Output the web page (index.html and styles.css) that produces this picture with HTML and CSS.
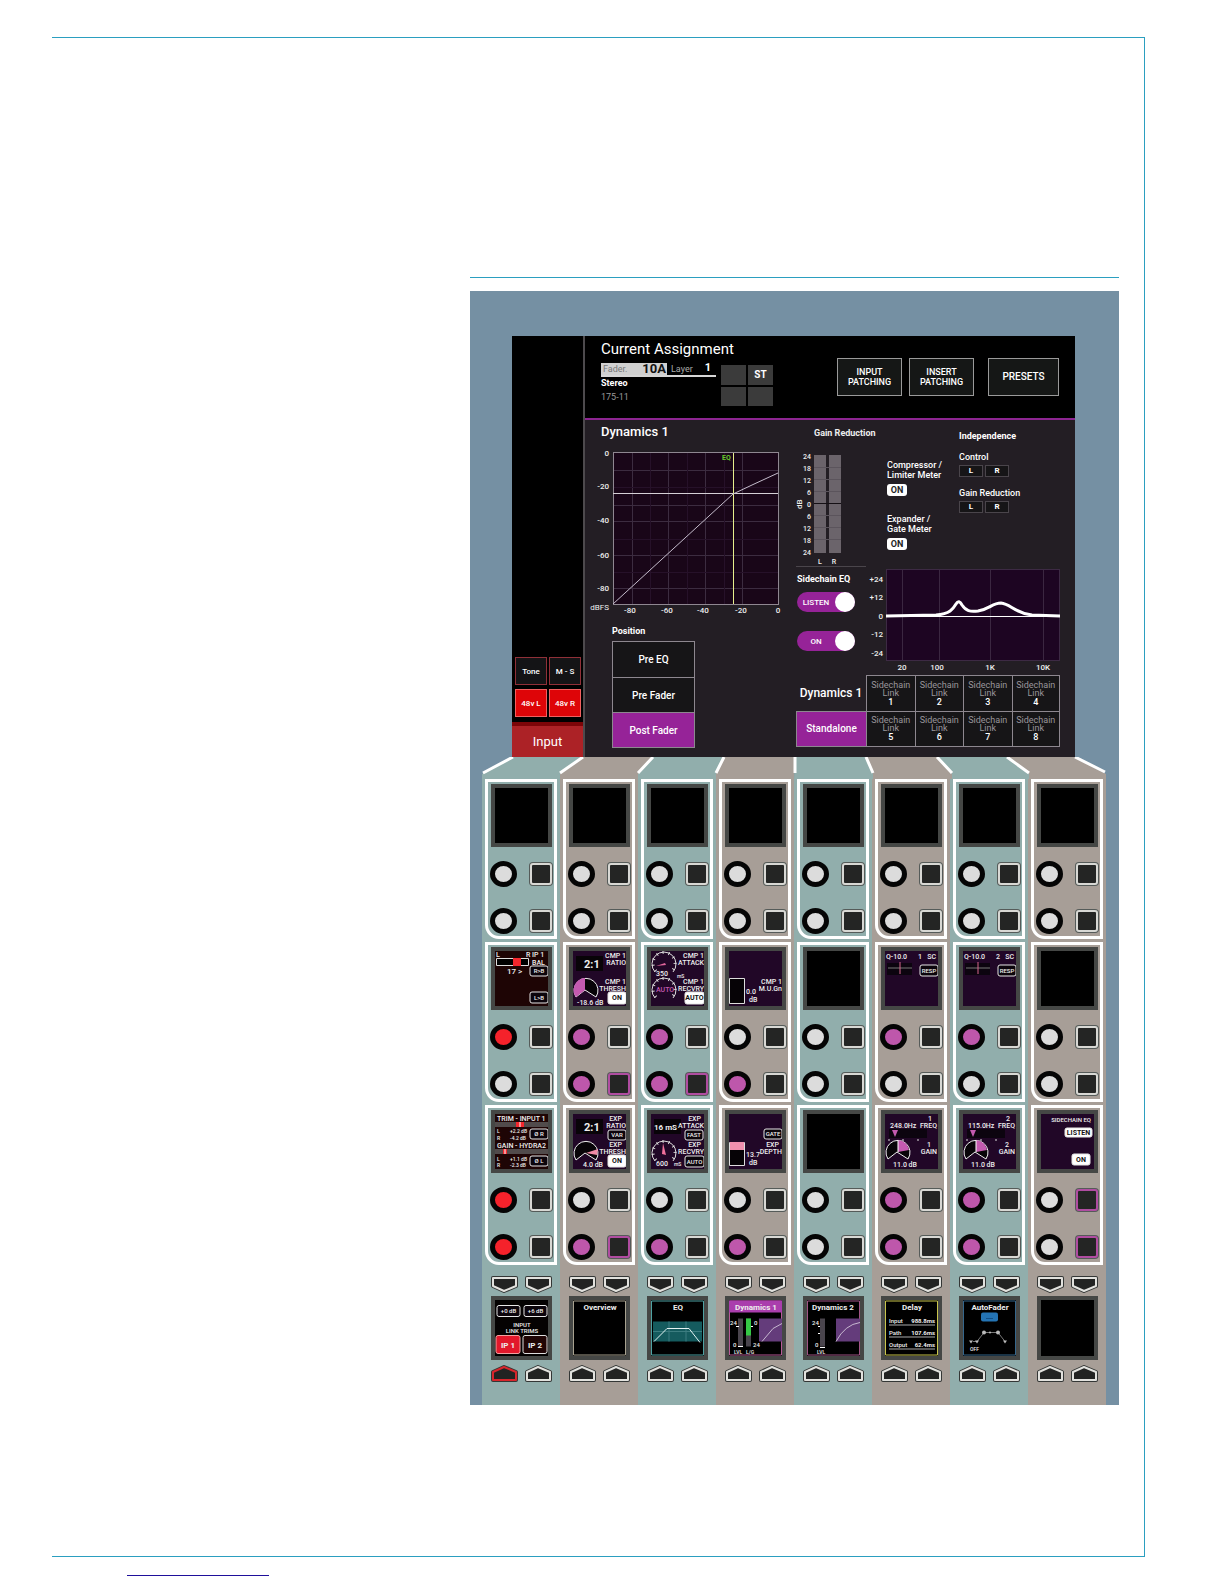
FILE: index.html
```html
<!DOCTYPE html>
<html lang="en">
<head>
    <meta charset="UTF-8">
    <meta name="viewport" content="width=device-width, initial-scale=1.0">
    <title>Current Assignment</title>
    <link rel="stylesheet" href="styles.css">
</head>
<body>

<main class="sheet">
    <div class="console">

        <!-- Touch screen -->
        <section class="screen">
            <aside class="side">
                <div class="side-buttons">
                    <button>Tone</button>
                    <button>M - S</button>
                    <button class="red">48v L</button>
                    <button class="red">48v R</button>
                </div>
                <button class="input-btn">Input</button>
            </aside>

            <div class="assign">
                <header class="top">
                    <div class="info">
                        <h1>Current Assignment</h1>
                        <div class="fader-line">
                            <span class="fader">Fader.<b>10A</b></span>
                            <span class="layer">Layer<b>1</b></span>
                        </div>
                        <div class="stereo">Stereo</div>
                        <div class="source">175-11</div>
                    </div>
                    <div class="legs"><span></span><span>ST</span><span></span><span></span></div>
                    <div class="top-buttons">
                        <button>INPUT<br>PATCHING</button>
                        <button>INSERT<br>PATCHING</button>
                        <button class="presets">PRESETS</button>
                    </div>
                </header>

                <div class="content">
                    <div class="left">
                        <h2>Dynamics 1</h2>
                        <svg class="curve" width="198" height="172" viewBox="0 0 198 172">
                            <rect x="26.5" y="8.5" width="165" height="152" fill="#190618" stroke="#8f8791"/>
                            <path d="M45.5 9V160M81.5 9V160M118.5 9V160M155.5 9V160M27 26.5H191M27 61.5H191M27 77.5H191M27 111.5H191M27 144.5H191" stroke="#3c2c40" fill="none"/>
                            <path d="M27 43.5H191M27 95.5H191M27 128.5H191M63.5 9V160M100.5 9V160M137.5 9V160" stroke="#261129" fill="none"/>
                            <path d="M26 49.5H191" stroke="#d5d0d6"/>
                            <path d="M146.5 9V160" stroke="#e6ee8c"/>
                            <path d="M26 160L146 50L165 41L191 29" stroke="#c4bccb" fill="none"/>
                            <text class="green" x="135" y="16">EQ</text>
                            <g class="axis end">
                                <text x="22" y="12">0</text>
                                <text x="22" y="45">-20</text>
                                <text x="22" y="79">-40</text>
                                <text x="22" y="114">-60</text>
                                <text x="22" y="147">-80</text>
                                <text x="22" y="166" class="thin">dBFS</text>
                            </g>
                            <g class="axis mid">
                                <text x="43" y="169">-80</text>
                                <text x="80" y="169">-60</text>
                                <text x="116" y="169">-40</text>
                                <text x="154" y="169">-20</text>
                                <text x="191" y="169">0</text>
                            </g>
                        </svg>
                        <h3>Position</h3>
                        <div class="position">
                            <button>Pre EQ</button>
                            <button>Pre Fader</button>
                            <button class="on">Post Fader</button>
                        </div>
                    </div>

                    <div class="right">
                        <div class="meters">
                            <svg width="90" height="146" viewBox="0 0 90 146">
                                <text class="bold" x="18" y="16">Gain Reduction</text>
                                <path d="M18 35H30V133H18zM33 35H45V133H33z" fill="#6b646b"/>
                                <path d="M18 47.5H45M18 59.5H45M18 71.5H45M18 95.5H45M18 107.5H45M18 119.5H45" stroke="#5b545c"/>
                                <path d="M18 83.5H45" stroke="#151015"/>
                                <g class="scale end">
                                    <text x="15" y="39">24</text>
                                    <text x="15" y="51">18</text>
                                    <text x="15" y="63">12</text>
                                    <text x="15" y="75">6</text>
                                    <text x="15" y="87">0</text>
                                    <text x="15" y="99">6</text>
                                    <text x="15" y="111">12</text>
                                    <text x="15" y="123">18</text>
                                    <text x="15" y="135">24</text>
                                </g>
                                <text class="db" transform="rotate(-90 6 89)" x="6" y="89">dB</text>
                                <g class="scale mid">
                                    <text x="24" y="144">L</text>
                                    <text x="38" y="144">R</text>
                                </g>
                            </svg>
                            <div class="meter-switches">
                                <div>Compressor /<br>Limiter Meter</div>
                                <button class="chip">ON</button>
                                <div>Expander /<br>Gate Meter</div>
                                <button class="chip">ON</button>
                            </div>
                            <div class="independence">
                                <h3>Independence</h3>
                                <div>Control</div>
                                <div class="lr"><button>L</button><button>R</button></div>
                                <div>Gain Reduction</div>
                                <div class="lr"><button>L</button><button>R</button></div>
                            </div>
                        </div>

                        <div class="sidechain">
                            <div class="toggles">
                                <h3>Sidechain EQ</h3>
                                <label class="toggle"><span>LISTEN</span><input type="checkbox" checked></label>
                                <label class="toggle"><span>ON</span><input type="checkbox" checked></label>
                            </div>
                            <svg width="194" height="109" viewBox="0 0 194 109">
                                <rect x="20.5" y="3.5" width="173" height="91" fill="#1d0522" stroke="#3d2a44"/>
                                <path d="M36.5 4V94M73.5 4V94M124.5 4V94M177.5 4V94" stroke="#3b2741"/>
                                <path d="M20 50.5H194" stroke="#fff"/>
                                <path d="M20 50L70 49C84 48 87 43 90 38Q93 33 96 39C100 45 104 46 112 45C124 43 126 37 135 37C145 38 148 47 166 49L194 50" stroke="#fff" stroke-width="3" fill="none"/>
                                <g class="axis end">
                                    <text x="17" y="16">+24</text>
                                    <text x="17" y="34">+12</text>
                                    <text x="17" y="53">0</text>
                                    <text x="17" y="71">-12</text>
                                    <text x="17" y="90">-24</text>
                                </g>
                                <g class="axis mid">
                                    <text x="36" y="104">20</text>
                                    <text x="71" y="104">100</text>
                                    <text x="124" y="104">1K</text>
                                    <text x="177" y="104">10K</text>
                                </g>
                            </svg>
                        </div>

                        <div class="links">
                            <div class="links-title">Dynamics 1</div>
                            <button><span>Sidechain<br>Link</span>1</button>
                            <button><span>Sidechain<br>Link</span>2</button>
                            <button><span>Sidechain<br>Link</span>3</button>
                            <button><span>Sidechain<br>Link</span>4</button>
                            <button class="on">Standalone</button>
                            <button><span>Sidechain<br>Link</span>5</button>
                            <button><span>Sidechain<br>Link</span>6</button>
                            <button><span>Sidechain<br>Link</span>7</button>
                            <button><span>Sidechain<br>Link</span>8</button>
                        </div>
                    </div>
                </div>
            </div>
        </section>

        <!-- Perspective join between the screen and the strips -->
        <svg class="fan" viewBox="0 0 624 22" preserveAspectRatio="none">
            <path fill="#91aeac" d="M29 0H101L78 17V22H0V17zM171 0H242L234 17V22H156V17zM313 0H384L391 17V22H312zM455 0H525L547 17V22H470V17z"/>
            <path fill="#a79e97" d="M101 0H171L156 17V22H78V17zM242 0H313L312 22H234V17zM384 0H455L470 17V22H391V17zM525 0H593L624 17V22H547V17z"/>
            <path stroke="#fff" stroke-width="3" fill="none" d="M31 0L1 16M101 0L78 16M171 0L156 16M242 0L234 16M313 0V16M384 0L391 16M455 0L470 16M525 0L547 16M593 0L623 15"/>
        </svg>

        <!-- Strips are filled in by the script -->
        <section class="strips" id="strips"></section>
    </div>
</main>
<div class="foot-rule"></div>

<script>
    // Small helpers for the display drawings
    const t = (x, y, text, cls = '') => `<text x="${x}" y="${y}" class="${cls}">${text}</text>`;
    const box = (x, y, w, h, text, cls = '') =>
        `<rect x="${x}" y="${y}" width="${w}" height="${h}" rx="2" class="box ${cls}"/>` +
        t(x + w / 2, y + h / 2 + 2, text, 'mid small ' + cls);
    const bg = color => `<rect width="53" height="55" fill="${color}"/>`;
    const purple = bg('#210727');
    const arc = (y, rest) =>
        `<path d="M5 ${y + 7}A11 11 0 1 1 21 ${y + 7}" stroke="#ddd" stroke-width="3" stroke-dasharray="1 5" fill="none"/>
         <path d="M4 ${y + 8}A12 12 0 1 1 22 ${y + 8}" stroke="#ddd" fill="none"/>${rest}`;
    const pie = (y, slice) =>
        `<path d="M12 ${y}L3 ${y + 7}A12 12 0 1 1 23 ${y + 7}z" fill="#080408" stroke="#eee"/>${slice}`;

    const sidechainQ = n => purple +
        `<path d="M2 12H27V24H2z" fill="#0c040f"/><path d="M3 17H27" stroke="#777"/><path d="M15 11V23" stroke="#d7668e"/>` +
        t(1, 8, 'Q-10.0') + t(33, 8, n) + t(51, 8, 'SC', 'end') + box(35, 14, 18, 11, 'RESP');
    const sidechainFreq = (n, freq) => purple +
        `<path d="M4 15H42V24H4z" fill="#0c040f"/><path d="M7 16H13L10 23z" fill="#c45ab0"/><path d="M4 25V27M18 25V27M33 25V27" stroke="#ddd"/>` +
        t(5, 14, freq) + t(47, 7, n, 'end') + t(52, 14, 'FREQ', 'end') +
        pie(38, '<path d="M13 38V26A12 12 0 0 1 24 36z" fill="#c45ab0"/><path d="M13 26V38" stroke="#fff"/>') +
        t(44, 33, n, 'mid') + t(52, 40, 'GAIN', 'end') + t(8, 53, '11.0 dB');

    const displays = {
        bal: bg('#1e0505') + t(1, 6, 'L') + t(31, 6, 'R') + t(37, 6, 'IP 1') + t(37, 14, 'BAL') +
            '<path d="M1.5 7.5H33.5V14.5H1.5z" fill="#000" stroke="#ddd"/><path d="M18 7H26V15H18z" fill="#f3272d"/>' +
            t(12, 23, '17 &gt;', 'big') + box(35, 15, 18, 10, 'R&gt;B') + box(35, 41, 18, 11, 'L&gt;B'),
        cmpRatio: purple + '<path d="M3 5H30V20H3z" fill="#080408"/>' + t(11, 17, '2:1', 'ratio') +
            t(53, 7, 'CMP 1', 'end') + t(53, 14, 'RATIO', 'end') + t(53, 33, 'CMP 1', 'end') +
            pie(39, '<path d="M12 39L3 46A12 12 0 0 1 12 27z" fill="#c45ab0"/>') + t(53, 40, 'THRESH', 'end') + t(4, 54, '-18.6 dB') + box(35, 41, 18, 12, 'ON', 'lit'),
        cmpAttack: purple + t(53, 7, 'CMP 1', 'end') + t(53, 14, 'ATTACK', 'end') +
            arc(13, '<path d="M5 15L14 12L15 14z" fill="#e0669c"/>') + t(5, 25, '350') + t(26, 27, 'mS', 'tiny') +
            arc(39, t(5, 41, 'AUTO', 'pink')) + t(53, 33, 'CMP 1', 'end') + t(53, 40, 'RECVRY', 'end') + box(34, 41, 19, 12, 'AUTO', 'lit'),
        cmpMakeup: purple + '<path d="M.5 27.5H15.5V52.5H.5z" fill="#060306" stroke="#ddd"/>' +
            t(17, 43, '0.0') + t(20, 51, 'dB') + t(53, 33, 'CMP 1', 'end') + t(53, 40, 'M.U.Gn', 'end'),
        q1: sidechainQ(1),
        q2: sidechainQ(2),
        trim: bg('#1e0505') + t(2, 7, 'TRIM - INPUT 1') +
            '<path d="M0 8H53V13H0zM0 35H53V40H0z" fill="#514b4b"/><path d="M21 8H29V13H21zM8 35H12V40H8z" fill="#f3272d"/><path d="M25 8V13M10 35V40" stroke="#fff"/>' +
            t(2, 19, 'L', 'tiny') + t(15, 19, '+2.2 dB', 'tiny') + t(2, 26, 'R', 'tiny') + t(15, 26, '-4.2 dB', 'tiny') + box(35, 15, 18, 10, 'Ø R') +
            t(2, 34, 'GAIN - HYDRA2') +
            t(2, 47, 'L', 'tiny') + t(15, 47, '+1.1 dB', 'tiny') + t(2, 53, 'R', 'tiny') + t(15, 53, '-2.3 dB', 'tiny') + box(35, 42, 18, 10, 'Ø L'),
        expRatio: purple + '<path d="M3 5H30V20H3z" fill="#080408"/>' + t(11, 17, '2:1', 'ratio') +
            t(49, 7, 'EXP', 'end') + t(53, 14, 'RATIO', 'end') + box(35, 16, 18, 10, 'VAR') + t(49, 33, 'EXP', 'end') +
            pie(39, '<path d="M13 39L25 35L24 41z" fill="#f08ba6"/>') + t(53, 40, 'THRESH', 'end') + t(10, 53, '4.0 dB') + box(35, 41, 18, 12, 'ON', 'lit'),
        expAttack: purple + '<path d="M3 5H30V20H3z" fill="#080408"/>' + t(3, 16, '16 mS', 'mid-size') +
            t(50, 7, 'EXP', 'end') + t(53, 14, 'ATTACK', 'end') + box(34, 16, 18, 10, 'FAST') + t(50, 33, 'EXP', 'end') +
            arc(39, '<path d="M12 29L15 41L11 40z" fill="#f0719c"/>') + t(53, 40, 'RECVRY', 'end') + t(5, 52, '600') + t(23, 52, 'mS', 'tiny') + box(34, 42, 19, 11, 'AUTO'),
        gate: purple + '<path d="M.5 28.5H15.5V51.5H.5z" fill="#060306" stroke="#ddd"/><path d="M1 28H15V36H1z" fill="#f08fae"/>' +
            t(17, 43, '13.7') + t(20, 51, 'dB') + box(35, 15, 18, 10, 'GATE') + t(50, 33, 'EXP', 'end') + t(53, 40, 'DEPTH', 'end'),
        freq1: sidechainFreq(1, '248.0Hz'),
        freq2: sidechainFreq(2, '115.0Hz'),
        sidechain: purple + t(50, 8, 'SIDECHAIN EQ', 'end small') + box(24, 14, 27, 9, 'LISTEN', 'lit') + box(31, 40, 18, 11, 'ON', 'lit'),

        trims: bg('#050202') + box(2, 5, 23, 11, '+0 dB') + box(29, 5, 23, 11, '+6 dB') +
            t(27, 26, 'INPUT', 'mid small') + t(27, 32, 'LINK TRIMS', 'mid small') +
            '<rect x="1" y="35" width="24" height="18" rx="2" fill="#e2182b" stroke="#f2a0a0"/><rect x="28" y="35" width="24" height="18" rx="2" fill="#200505" stroke="#ddd"/>' +
            t(13, 47, 'IP 1', 'mid size8') + t(40, 47, 'IP 2', 'mid size8'),
        overview: bg('#000') + '<path d="M.5 .5H52.5V54.5H.5z" stroke="#a7a18f" fill="none"/>' + t(27, 9, 'Overview', 'mid name'),
        eq: bg('#000') + '<path d="M.5 .5H52.5V54.5H.5z" stroke="#4ea2a3" fill="none"/>' + t(27, 9, 'EQ', 'mid name') +
            '<path d="M2 21H51V41H2z" fill="#155b5e"/><path d="M2 31H51M18 21V41M35 21V41" stroke="#3c7d80"/><path d="M3 41L16 28H38L49 42" stroke="#e5f3f3" fill="none"/>',
        dyn1: bg('#000') + '<path d="M.5 .5H52.5V54.5H.5z" stroke="#b85b97" fill="none"/><path d="M0 0H53V12H0z" fill="#aa3ead"/>' + t(27, 9, 'Dynamics 1', 'mid name') +
            '<path d="M9 18H14V46H9zM17 18H22V46H17z" fill="#4a454d"/><path d="M17 18H22V35H17z" fill="#35c845"/><path d="M7 26H10M22 26H24M9 46H14" stroke="#fff"/><path d="M30 18H53V41H30z" fill="#643c7b"/><path d="M33 41L44 28L53 23" stroke="#c7b8d0" fill="none"/>' +
            t(1, 24, '24', 'small') + t(25, 24, '0', 'small') + t(4, 46, '0', 'small') + t(24, 46, '24', 'small') + t(5, 53, 'LVL', 'tiny') + t(17, 53, 'L/G', 'tiny'),
        dyn2: bg('#000') + '<path d="M.5 .5H52.5V54.5H.5z" stroke="#a15485" fill="none"/>' + t(26, 9, 'Dynamics 2', 'mid name') +
            '<path d="M13 18H18V46H13z" fill="#4a454d"/><path d="M11 26H13M11 33H13M13 47H18" stroke="#fff"/><path d="M29 18H53V41H29z" fill="#643c7b"/><path d="M29 41Q38 24 53 22" stroke="#c7b8d0" fill="none"/>' +
            t(5, 24, '24', 'small') + t(8, 46, '0', 'small') + t(10, 53, 'LVL', 'tiny'),
        delay: bg('#000') + '<path d="M.5 .5H52.5V54.5H.5z" stroke="#c9c54c" fill="none"/>' + t(27, 9, 'Delay', 'mid name') +
            t(4, 22, 'Input', 'small') + t(50, 22, '988.8ms', 'end strong') + t(4, 34, 'Path', 'small') + t(50, 34, '107.6ms', 'end strong') + t(4, 46, 'Output', 'small') + t(50, 46, '62.4ms', 'end strong') +
            '<path d="M4 24.5H50M4 36.5H50M4 48.5H50" stroke="#aaa"/>',
        auto: bg('#000') + '<path d="M.5 .5H52.5V54.5H.5z" stroke="#35668b" fill="none"/>' + t(27, 9, 'AutoFader', 'mid name') +
            '<rect x="18" y="12" width="17" height="9" rx="2" fill="#2474b4"/><path d="M23 18H30" stroke="#135087"/><path d="M10 41H14L21 32H35L42 41" stroke="#777" fill="none"/>' +
            '<path d="M6 40H10L8 43zM12 40H16L14 43zM40 40H44L42 43z" fill="#bbb"/><circle cx="21" cy="32" r="2" fill="#bbb"/><circle cx="27" cy="32" r="1" fill="#bbb"/><circle cx="35" cy="32" r="2" fill="#bbb"/>' +
            t(7, 50, 'OFF', 'tiny')
    };

    // Per column: three modules as [display, knob 1, knob 2, button 1, button 2], then the bottom display
    const blank = ['', '', '', '', ''];
    const columns = [
        [blank, ['bal', 'red', '', '', ''], ['trim', 'red', 'red', '', ''], 'trims'],
        [blank, ['cmpRatio', 'pink', 'pink', '', 'pink'], ['expRatio', '', 'pink', '', 'pink'], 'overview'],
        [blank, ['cmpAttack', 'pink', 'pink', '', 'pink'], ['expAttack', '', 'pink', '', ''], 'eq'],
        [blank, ['cmpMakeup', '', 'pink', '', ''], ['gate', '', 'pink', '', ''], 'dyn1'],
        [blank, blank, blank, 'dyn2'],
        [blank, ['q1', 'pink', '', '', ''], ['freq1', 'pink', 'pink', '', ''], 'delay'],
        [blank, ['q2', 'pink', '', '', ''], ['freq2', 'pink', 'pink', '', ''], 'auto'],
        [blank, blank, ['sidechain', '', '', 'pink', 'pink'], '']
    ];

    function display(name) {
        return `<div class="display"><svg viewBox="0 0 53 55">${displays[name] || ''}</svg></div>`;
    }

    function controls(knob, key) {
        return `<div class="controls"><button class="knob ${knob}" aria-label="Knob"></button><button class="key ${key}" aria-label="Key"></button></div>`;
    }

    function arrows(dir, colors) {
        const points = dir === 'down' ? '2,2 25,2 25,10 13,15 2,10' : '2,15 25,15 25,7 13,2 2,7';
        return '<div class="arrows">' + colors.map(c =>
            `<button class="arrow ${c}" aria-label="${dir}"><svg width="27" height="17" viewBox="0 0 27 17"><polygon points="${points}" class="rim"/><polygon points="${points}" class="face"/></svg></button>`
        ).join('') + '</div>';
    }

    document.getElementById('strips').innerHTML = columns.map((col, i) => `
      <div class="strip">
        ${col.slice(0, 3).map(m => `<div class="module">${display(m[0])}${controls(m[1], m[3])}${controls(m[2], m[4])}</div>`).join('')}
        <div class="bank">
          ${arrows('down', ['', ''])}
          ${display(col[3])}
          ${arrows('up', [i === 0 ? 'red' : '', ''])}
        </div>
      </div>`).join('');
</script>

</body>
</html>
```
FILE: styles.css
```css
* {
    box-sizing: border-box;
}

body {
    margin: 0;
    padding-top: 37px;
    background-color: #fff;
    font-family: Roboto, "Liberation Sans", sans-serif;
    color: #fff;
}

h1, h2, h3 {
    margin: 0;
    font-weight: normal;
}

button {
    margin: 0;
    padding: 0;
    border: none;
    background: none;
    color: inherit;
    font-family: inherit;
    cursor: pointer;
}

svg {
    display: block;
}

/* Sheet frame */
.sheet {
    margin: 0 79px 0 52px;
    padding: 239px 25px 151px 418px;
    border: 1px solid #2b9fc0;
    border-left: none;
}

.console {
    border-top: 1px solid #2b9fc0;
    padding-top: 13px;
}

.foot-rule {
    width: 142px;
    margin: 18px 0 8px 127px;
    border-top: 1px solid #1f109b;
}

/* Touch screen */
.screen {
    display: grid;
    grid-template-columns: 73px 1fr;
    border: solid #7590a3;
    border-width: 45px 44px 0 42px;
    background-color: #231e24;
}

.side {
    display: flex;
    flex-direction: column;
    justify-content: flex-end;
    background-color: #000;
    border-right: 2px solid #4d4a4d;
}

.side-buttons {
    display: grid;
    grid-template-columns: 1fr 1fr;
    gap: 4px 2px;
    padding: 0 2px 5px 3px;
}

.side-buttons button {
    height: 28px;
    border: 1px solid #903038;
    background-color: #141416;
    font-size: 8px;
    font-weight: 500;
}

.side-buttons .red {
    background-color: #de0508;
    border-color: #f06060;
}

.input-btn {
    height: 35px;
    border-top: 4px solid #7c0508;
    background-color: #ac2226;
    font-size: 13px;
}

.top {
    display: flex;
    height: 84px;
    padding: 4px 16px 0;
    background-color: #000;
    border-bottom: 2px solid #8d2591;
}

.info {
    width: 120px;
}

h1 {
    font-size: 15px;
    line-height: 18px;
    white-space: nowrap;
}

.fader-line {
    display: flex;
    width: 115px;
    height: 14px;
    margin-top: 5px;
    border-bottom: 2px solid #d6d6d6;
    font-size: 9px;
    line-height: 12px;
    color: #aaa;
}

.fader {
    display: flex;
    justify-content: space-between;
    width: 66px;
    padding: 0 1px 0 2px;
    background-color: #d0d0d0;
    color: #777;
}

.fader b {
    font-size: 13px;
    color: #111;
}

.layer {
    display: flex;
    flex: 1;
    justify-content: space-between;
    padding: 0 5px 0 4px;
}

.layer b {
    font-size: 11px;
    line-height: 10px;
    color: #fff;
}

.stereo {
    font-size: 9px;
    font-weight: bold;
    line-height: 12px;
}

.source {
    font-size: 9px;
    line-height: 16px;
    color: #999;
}

.legs {
    display: grid;
    grid-template-columns: 25px 25px;
    grid-template-rows: 20px 19px;
    gap: 2px;
    margin-top: 25px;
}

.legs span {
    background-color: #3b3b3b;
    font-size: 10px;
    font-weight: bold;
    line-height: 20px;
    text-align: center;
}

.top-buttons {
    display: flex;
    gap: 7px;
    margin: 18px 0 0 auto;
}

.top-buttons button {
    width: 65px;
    height: 38px;
    border: 1px solid #9a9a9a;
    background-color: #151716;
    font-size: 9px;
    font-weight: 500;
    line-height: 10px;
}

.top-buttons .presets {
    width: 71px;
    margin-left: 7px;
    font-size: 10px;
}

/* Screen body */
.content {
    display: grid;
    grid-template-columns: 211px 1fr;
    padding: 0 15px 9px 0;
}

h2 {
    padding-left: 16px;
    font-size: 13px;
    font-weight: 500;
    line-height: 24px;
}

.curve {
    margin-left: 2px;
}

h3 {
    font-size: 9px;
    font-weight: bold;
    line-height: 12px;
}

.left h3 {
    padding: 8px 0 3px 27px;
    line-height: 14px;
}

.position {
    display: flex;
    flex-direction: column;
    width: 83px;
    margin-left: 27px;
    border: 1px solid #8d878f;
}

.position button {
    height: 35px;
    background-color: #161517;
    font-size: 10px;
    font-weight: 500;
}

.position button + button {
    border-top: 1px solid #8d878f;
}

.position .on, .links .on {
    background-color: #962398;
}

/* SVG text */
text {
    fill: #eee;
    font-family: Roboto, "Liberation Sans", sans-serif;
    font-size: 7px;
}

.axis text {
    font-size: 8px;
    font-weight: 500;
}

.axis .thin {
    font-weight: normal;
}

.scale text {
    font-weight: 500;
}

.end {
    text-anchor: end;
}

.mid {
    text-anchor: middle;
}

.bold {
    font-size: 9px;
    font-weight: bold;
}

.db {
    font-size: 8px;
}

.green {
    fill: #67c72b;
    font-weight: bold;
}

/* Meters */
.meters {
    display: flex;
    height: 146px;
    font-size: 9px;
    font-weight: 500;
    line-height: 10px;
}

.meter-switches {
    width: 73px;
    padding: 40px 0 0 1px;
    white-space: nowrap;
}

.chip {
    display: block;
    width: 20px;
    height: 12px;
    margin: 4px 0 18px;
    border-radius: 3px;
    background-color: #fff;
    color: #231e24;
    font-size: 9px;
    font-weight: bold;
}

.independence {
    padding-top: 10px;
    white-space: nowrap;
}

.independence h3 {
    margin-bottom: 10px;
}

.lr {
    display: flex;
    gap: 2px;
    margin: 3px 0 11px;
}

.lr button {
    width: 24px;
    height: 12px;
    border: 1px solid #4a454b;
    background-color: #161517;
    font-size: 8px;
    font-weight: bold;
    line-height: 8px;
}

/* Sidechain */
.sidechain {
    display: flex;
    justify-content: space-between;
}

.toggles {
    width: 70px;
    padding: 6px 0 0 1px;
    border-top: 1px solid #4a454b;
}

.toggle {
    display: flex;
    align-items: center;
    width: 58px;
    height: 20px;
    margin: 7px 0 19px;
    border-radius: 10px;
    background-color: #962398;
    font-size: 8px;
    font-weight: 500;
    cursor: pointer;
}

.toggle span {
    flex: 1;
    text-align: center;
}

.toggle input {
    appearance: none;
    width: 20px;
    height: 20px;
    margin: 0;
    border-radius: 50%;
    background-color: #fff;
}

.links {
    display: grid;
    grid-template-columns: 70px repeat(4, 1fr);
    grid-auto-rows: 36px;
}

.links-title {
    font-size: 12px;
    font-weight: 500;
    line-height: 36px;
    text-align: center;
    white-space: nowrap;
}

.links button {
    border: solid #8d878f;
    border-width: 1px 0 0 1px;
    background-color: #161517;
    font-size: 9px;
    font-weight: 500;
    line-height: 10px;
}

.links button:nth-child(5n) {
    border-right-width: 1px;
}

.links button:nth-child(n+6) {
    border-bottom-width: 1px;
}

.links span {
    display: block;
    color: #9a969b;
    font-weight: normal;
    line-height: 8px;
}

.links .on {
    font-size: 10px;
}

/* Fan and strips */
.fan {
    width: 100%;
    height: 22px;
    padding: 0 13px 0 12px;
    background-color: #7590a3;
}

.strips {
    display: grid;
    grid-template-columns: repeat(8, 1fr);
    padding: 0 13px 0 12px;
    background-color: #7590a3;
}

.strip {
    padding: 0 3px 23px;
    background-color: #91aeac;
}

.strip:nth-child(even) {
    background-color: #a79e97;
}

.module {
    height: 160px;
    margin-bottom: 3px;
    padding: 2px 2px 0 3px;
    border: 3px solid #fff;
    border-bottom-left-radius: 14px;
}

.display {
    height: 63px;
    border: 4px solid #454745;
    background-color: #000;
}

.display svg {
    width: 100%;
    height: 100%;
}

.controls {
    display: flex;
    justify-content: space-between;
    align-items: center;
    margin: 14px 0 21px -1px;
}

.knob {
    width: 27px;
    height: 26px;
    border: 5px solid #050505;
    border-radius: 50%;
    background-color: #dcdcdc;
}

.knob.red {
    background-color: #f5222b;
}

.knob.pink {
    background-color: #be57ab;
}

.key {
    width: 22px;
    height: 22px;
    border: 2px solid #d8d8d4;
    border-radius: 3px;
    background-color: #242524;
    box-shadow: 0 0 0 1px #555b59;
}

.key.pink {
    border-color: #b04da1;
}

.bank {
    padding: 8px 5px 0 6px;
}

.bank .display {
    height: 64px;
    margin: 3px 0 5px;
}

.arrows {
    display: flex;
    justify-content: space-between;
}

.arrow .rim {
    fill: none;
    stroke: #343736;
    stroke-width: 4;
    stroke-linejoin: round;
}

.arrow .face {
    fill: #222322;
    stroke: #e2e2de;
    stroke-width: 2;
    stroke-linejoin: round;
}

.arrow.red .face {
    stroke: #d8252b;
}

/* Display lettering */
.display text {
    font-weight: 500;
}

.display .tiny {
    font-size: 5px;
}

.display .small, .display .strong {
    font-size: 6px;
}

.display .big {
    font-size: 8px;
}

.display .size8, .display .mid-size {
    font-size: 8px;
    font-weight: bold;
}

.display .ratio {
    font-size: 11px;
    font-weight: bold;
}

.display .name {
    font-size: 8px;
    font-weight: bold;
}

.display .strong {
    font-weight: bold;
}

.display .pink {
    fill: #c45ab0;
}

.box {
    fill: #0c050c;
    stroke: #e6e6e6;
}

rect.lit {
    fill: #fff;
}

.display text.lit {
    fill: #111;
    font-size: 7px;
    font-weight: bold;
}
```
